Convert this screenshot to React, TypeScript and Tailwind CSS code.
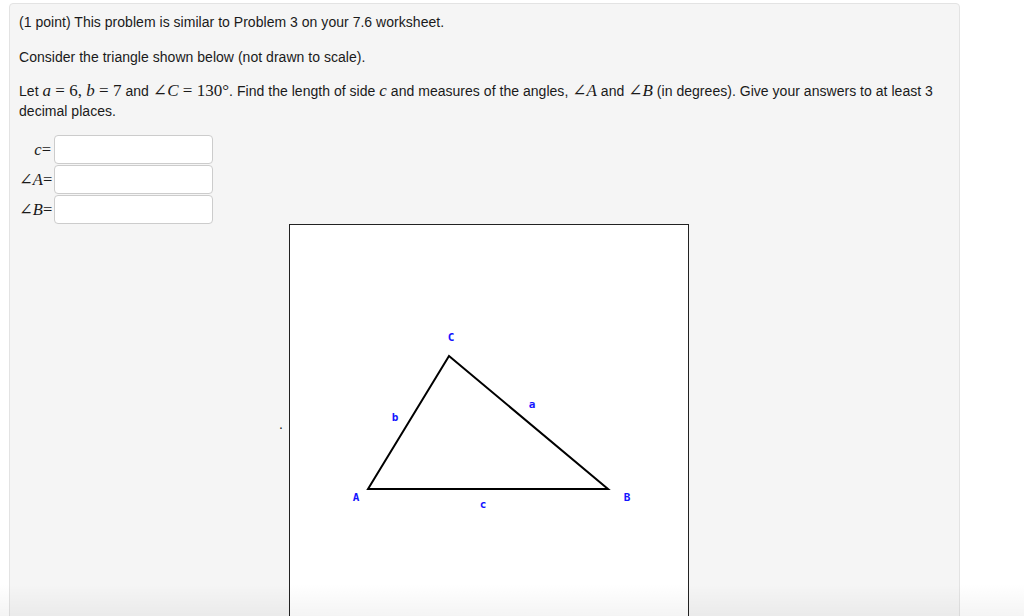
import React from "react";

const M = ({ children }: { children: React.ReactNode }) => (
  <span className="text-[17px] leading-[0]" style={{ fontFamily: '"Liberation Serif", "DejaVu Serif", serif' }}>
    {children}
  </span>
);
const I = ({ children }: { children: React.ReactNode }) => <i className="italic">{children}</i>;

export default function App() {
  return (
    <div
      className="relative min-h-[616px] h-[616px] overflow-hidden bg-white text-[14px] leading-[20px] text-[#1a1a1a]"
      style={{ fontFamily: '"Liberation Sans", Arial, sans-serif' }}
    >
      <div className="ml-[9px] mt-[3px] w-[951px] h-[700px] rounded-[4px] border border-[#e3e3e3] bg-[#f5f5f5] px-[9px] pt-[8px]">
        <p className="tracking-[0.03px]">(1 point) This problem is similar to Problem 3 on your 7.6 worksheet.</p>
        <p className="mt-[15px] tracking-[0.03px]">Consider the triangle shown below (not drawn to scale).</p>
        <p className="mt-[14px] tracking-[0.03px]">
          Let <M><I>a</I> = 6, <I>b</I> = 7</M> and <M>∠<I>C</I> = 130°</M>. Find the length of side{" "}
          <M><I>c</I></M> and measures of the angles, <M>∠<I>A</I></M> and <M>∠<I>B</I></M> (in degrees). Give your answers to at least 3
          <br />
          decimal places.
        </p>
        <div className="mt-[14px] flex flex-col gap-[1px]">
          {[
            <><I>c</I>=</>,
            <>∠<I>A</I>=</>,
            <>∠<I>B</I>=</>,
          ].map((lab, i) => (
            <div key={i} className="flex items-center">
              <div
                className="w-[32px] text-right text-[16.5px]"
                style={{ fontFamily: '"Liberation Serif", "DejaVu Serif", serif' }}
              >
                {lab}
              </div>
              <div className="ml-[3px] h-[29px] w-[159px] rounded-[4px] border border-[#cccccc] bg-white" />
            </div>
          ))}
        </div>
        <div className="flex items-center pl-[260px]">
          <span className="mr-[6px] leading-none">.</span>
          <div className="h-[400px] w-[400px] border border-[#222] bg-white">
            <svg width="398" height="398" viewBox="0 0 398 398">
              <polygon points="78,264 159,131 318,264" fill="none" stroke="#000" strokeWidth="2" />
              <g
                fill="#1414ff"
                fontSize="11"
                fontWeight="bold"
                textAnchor="middle"
                dominantBaseline="central"
                style={{ fontFamily: '"DejaVu Sans Mono", monospace' }}
              >
                <text x="161" y="112">C</text>
                <text x="242" y="179">a</text>
                <text x="105" y="192">b</text>
                <text x="66" y="272">A</text>
                <text x="337" y="272">B</text>
                <text x="193" y="279">c</text>
              </g>
            </svg>
          </div>
        </div>
      </div>
      <div className="pointer-events-none absolute bottom-0 left-0 right-0 h-[32px] bg-gradient-to-b from-transparent to-[rgba(0,0,0,0.045)]" />
    </div>
  );
}
